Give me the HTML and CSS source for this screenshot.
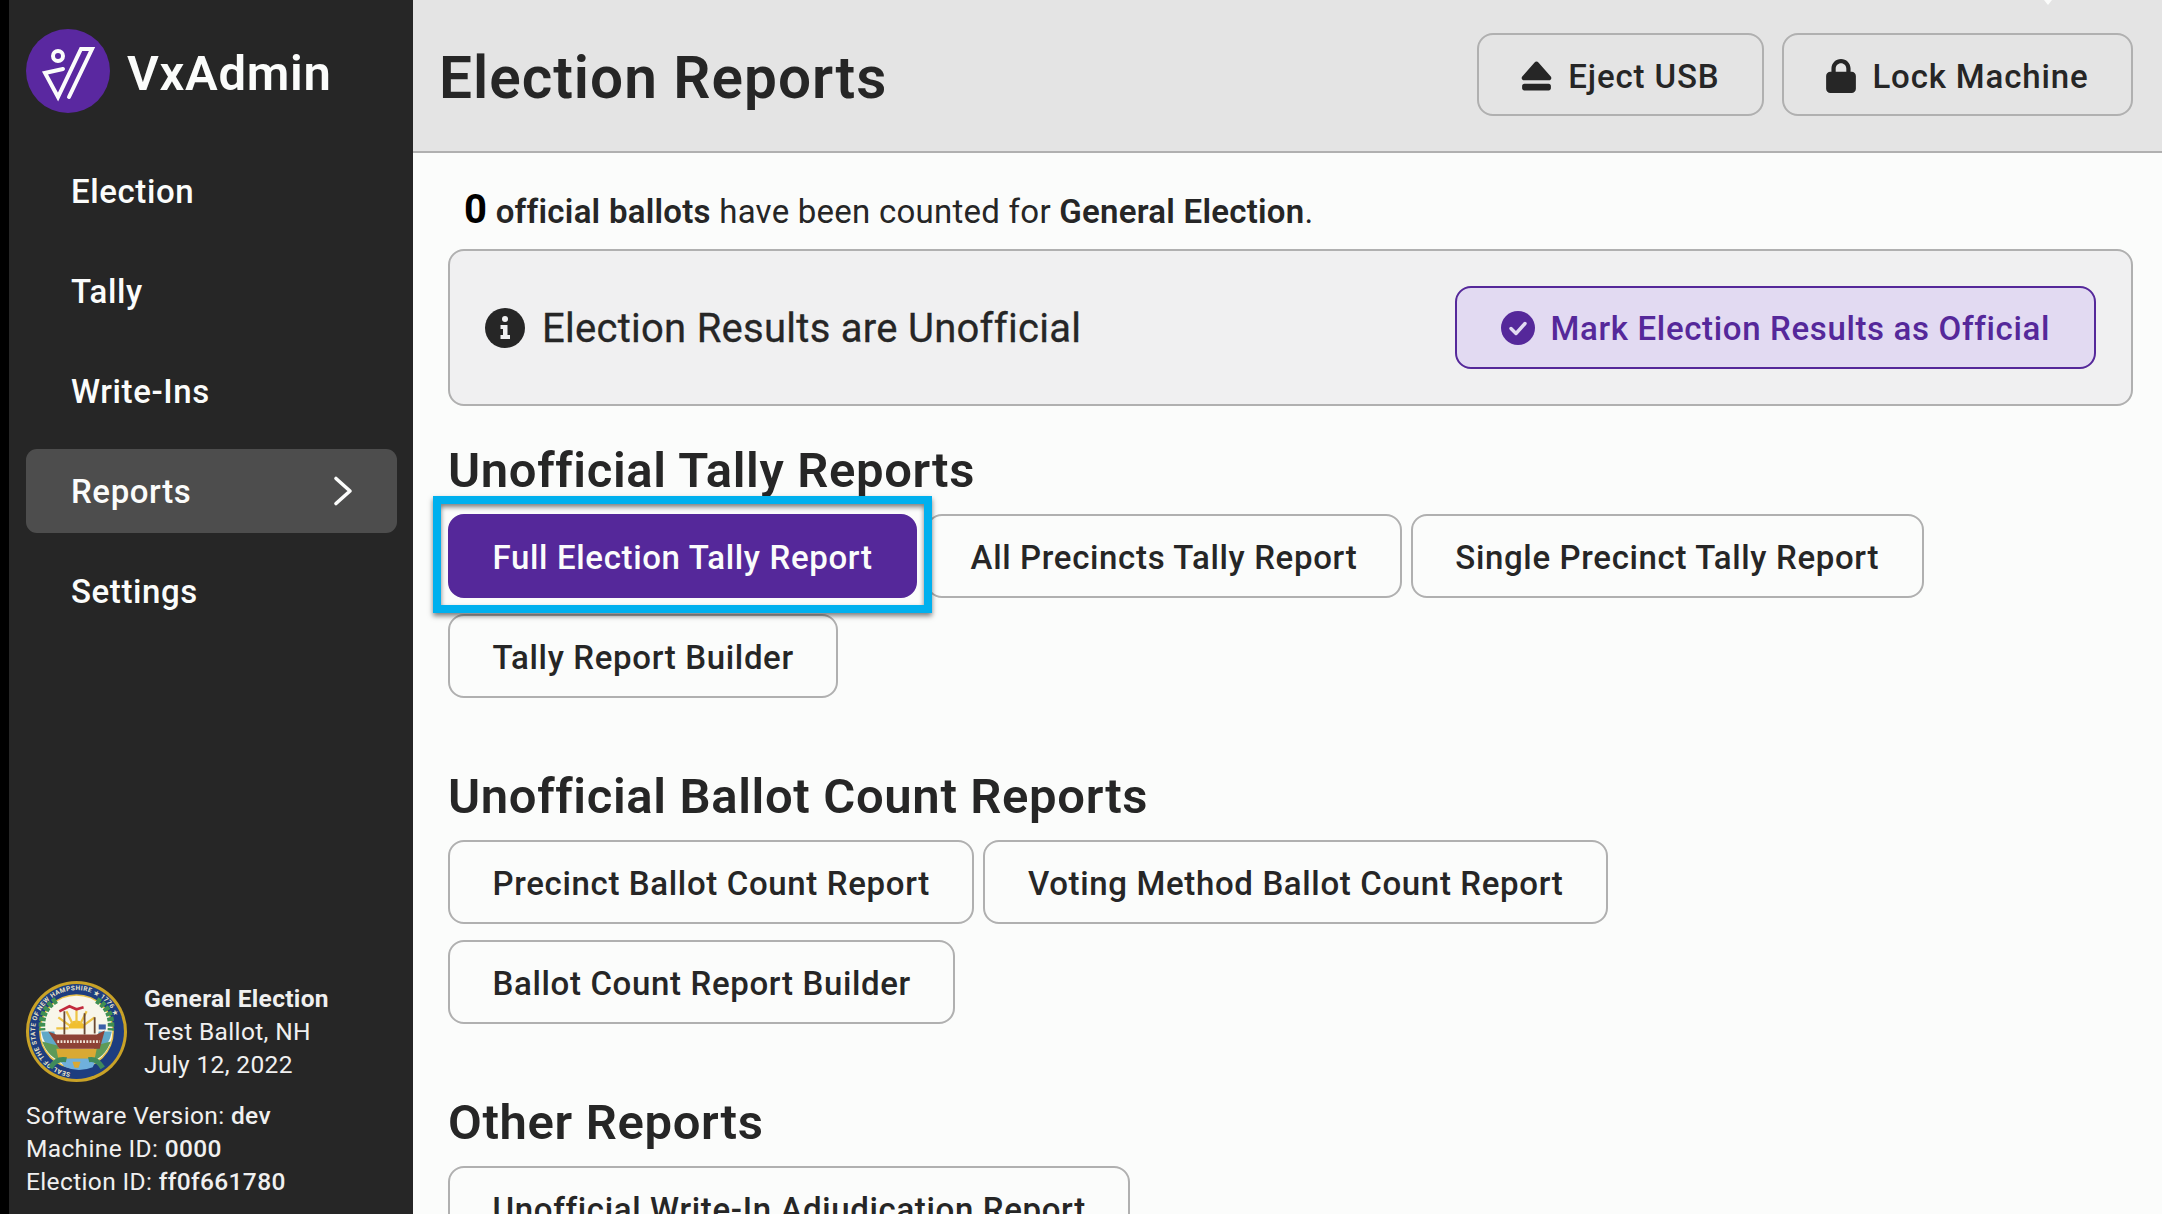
FILE: index.html
```html
<!DOCTYPE html>
<html lang="en">
<head>
<meta charset="utf-8">
<title>VxAdmin</title>
<link rel="stylesheet" href="styles.css">
</head>
<body>
<div class="app">
  <aside class="sidebar">
    <div class="brand">
      <svg class="logo" viewBox="0 0 84 84" aria-hidden="true">
        <circle cx="42" cy="42" r="42" fill="#5a28a0"/>
        <g fill="none" stroke="#fbfcfb" stroke-width="4" stroke-linejoin="miter" stroke-linecap="round">
          <path d="M43 68 L66 20 L55 20 L32 68 L19 44 L37 40"/>
          <circle cx="32" cy="27" r="5"/>
        </g>
      </svg>
      <span class="brand-name">VxAdmin</span>
    </div>
    <nav class="nav">
      <a class="nav-item">Election</a>
      <a class="nav-item">Tally</a>
      <a class="nav-item">Write-Ins</a>
      <a class="nav-item active">Reports
        <svg class="chev" viewBox="0 0 24 32" aria-hidden="true"><path d="M5 3.5 L19 16 L5 28.5" fill="none" stroke="#fbfcfb" stroke-width="3.6" stroke-linecap="round" stroke-linejoin="round"/></svg>
      </a>
      <a class="nav-item">Settings</a>
    </nav>
    <div class="meta">
      <div class="election">
        <svg class="seal" viewBox="0 0 100 100" aria-hidden="true">
          <defs><path id="ringText" d="M50 50 m0 41 a41 41 0 1 1 0.01 0"/></defs>
          <circle cx="50" cy="50" r="50" fill="#c9a227"/>
          <circle cx="50" cy="50" r="47" fill="#1d3d7f"/>
          <text class="seal-text"><textPath href="#ringText" startOffset="6">SEAL OF THE STATE OF NEW HAMPSHIRE ★ 1776 ★</textPath></text>
          <circle cx="50" cy="50" r="37" fill="#e8c14a"/>
          <circle cx="50" cy="50" r="35.5" fill="#f8f6ea"/>
          <path d="M15 50 H28 L32 67 H68 L72 50 H85 A35.5 35.5 0 0 1 15 50Z" fill="#5fa8c8"/>
          <path d="M16 60 Q22 76 36 80 L32 64Z M84 60 Q78 76 64 80 L68 64Z" fill="#5d9a58"/>
          <path d="M30 67 H70 L68 77 H32Z" fill="#d9a933"/>
          <path d="M32 77 H70 L66 85.4 A36 36 0 0 1 38 85Z" fill="#6fb0dc"/>
          <path d="M24 86 Q30 76 40 78 M76 86 Q70 76 62 78" fill="none" stroke="#3f8a5c" stroke-width="5"/>
          <path d="M46 80 H54 L52 86 H48Z" fill="#d9a933"/>
          <path d="M42 47 A8 8 0 0 1 58 47Z" fill="#f1bf2e"/>
          <g stroke="#eec444" stroke-width="2.2"><path d="M50 42 V29M46 42 L40 30M54 42 L60 30M43 44 L32 36M57 44 L68 36M42 47 H30"/></g>
          <path d="M22 50 L30 53 H70 L78 49 L73 67 H33Z" fill="#8d4235"/>
          <path d="M31 60 H73" stroke="#f0e6d8" stroke-width="2.6" stroke-dasharray="1.8 1.4"/>
          <g stroke="#6b4a35" stroke-width="1.8"><path d="M38 30 V53M58 32 V53M68 36 V52"/></g>
          <path d="M72 43 H79 V48 H72Z" fill="#3a5ea8"/>
          <path d="M33 30 L43 25 L50 28 L57 26" fill="none" stroke="#c22b3d" stroke-width="2.6"/>
          <path d="M30 19 Q14 28 16 49 M70 19 Q86 28 84 49" fill="none" stroke="#3f8f52" stroke-width="6.5" stroke-dasharray="4 1.5"/>
        </svg>
        <div class="election-text">
          <strong>General Election</strong>
          <span>Test Ballot, NH</span>
          <span>July 12, 2022</span>
        </div>
      </div>
      <div class="meta-lines">
        <div>Software Version: <b>dev</b></div>
        <div>Machine ID: <b>0000</b></div>
        <div>Election ID: <b>ff0f661780</b></div>
      </div>
    </div>
  </aside>
  <div class="page">
    <header class="header">
      <h1>Election Reports</h1>
      <div class="header-actions">
        <button class="btn btn-header">
          <svg class="ico-eject" viewBox="0 0 448 512" aria-hidden="true"><path d="M224 48c-11 0-21 5-28 13L18 264c-9 10-11 24-5 35s17 19 30 19h362c13 0 24-8 30-19s4-25-5-35L252 61c-7-8-17-13-28-13zM48 368c-18 0-32 14-32 32v32c0 18 14 32 32 32h352c18 0 32-14 32-32v-32c0-18-14-32-32-32z" fill="#262626"/></svg>
          Eject USB
        </button>
        <button class="btn btn-header">
          <svg class="ico-lock" viewBox="0 0 448 512" aria-hidden="true"><path d="M144 144v48h160v-48c0-44-36-80-80-80s-80 36-80 80zM80 192v-48C80 64 144 0 224 0s144 64 144 144v48h16c35 0 64 29 64 64v192c0 35-29 64-64 64H64c-35 0-64-29-64-64V256c0-35 29-64 64-64z" fill="#262626"/></svg>
          Lock Machine
        </button>
      </div>
    </header>
    <main class="main">
      <p class="summary"><span class="zero">0</span> <b>official ballots</b> have been counted for <b>General Election</b>.</p>
      <section class="panel">
        <div class="status">
          <svg class="ico-info" viewBox="0 0 40 40" aria-hidden="true">
            <circle cx="20" cy="20" r="20" fill="#262626"/>
            <circle cx="20" cy="11" r="3" fill="#f0f0f1"/>
            <path d="M15.5 17 H22.5 V27 H25 V31 H15.5 V27 H18 V21 H15.5Z" fill="#f0f0f1"/>
          </svg>
          <span class="status-text">Election Results are Unofficial</span>
        </div>
        <button class="btn btn-mark">
          <svg class="ico-check" viewBox="0 0 34 34" aria-hidden="true">
            <circle cx="17" cy="17" r="17" fill="#55289a"/>
            <path d="M10 17.5 L15 22.5 L24 12.5" fill="none" stroke="#e2daf2" stroke-width="3.4" stroke-linecap="round" stroke-linejoin="round"/>
          </svg>
          Mark Election Results as Official
        </button>
      </section>
      <h2>Unofficial Tally Reports</h2>
      <div class="btn-row">
        <button class="btn btn-primary">Full Election Tally Report</button>
        <button class="btn">All Precincts Tally Report</button>
        <button class="btn">Single Precinct Tally Report</button>
        <button class="btn">Tally Report Builder</button>
      </div>
      <h2>Unofficial Ballot Count Reports</h2>
      <div class="btn-row">
        <button class="btn">Precinct Ballot Count Report</button>
        <button class="btn">Voting Method Ballot Count Report</button>
        <button class="btn">Ballot Count Report Builder</button>
      </div>
      <h2>Other Reports</h2>
      <div class="btn-row">
        <button class="btn">Unofficial Write-In Adjudication Report</button>
      </div>
    </main>
  </div>
</div>
<svg class="cursor" viewBox="0 0 12 6" aria-hidden="true"><path d="M2 0 L6 5 L10 0Z" fill="#fbfcfb"/></svg>
</body>
</html>
```
FILE: styles.css
```css
* { box-sizing: border-box; }
html, body { margin: 0; height: 100%; overflow: hidden; }
body { font-family: Roboto, "Liberation Sans", sans-serif; color: #262626; background: #000; }
.app { display: flex; height: 1214px; width: 2162px; padding-left: 9px; }
.sidebar { width: 404px; flex: none; background: #262626; color: #fbfcfb; display: flex; flex-direction: column; padding: 29px 16px 0 17px; }
.brand { display: flex; align-items: center; gap: 17px; height: 84px; }
.logo { width: 84px; height: 84px; flex: none; }
.brand-name { font-size: 49px; font-weight: 600; letter-spacing: 0.7px; padding-top: 4px; }
.nav { display: flex; flex-direction: column; gap: 16px; margin-top: 36px; }
.nav-item { display: flex; align-items: center; justify-content: space-between; height: 84px; padding: 0 42px 0 45px; font-size: 33px; font-weight: 500; letter-spacing: 0.6px; border-radius: 11px; }
.nav-item.active { background: #4d4d4d; }
.chev { width: 24px; height: 32px; }
.meta { margin-top: auto; padding-bottom: 16px; font-size: 24.5px; line-height: 33px; letter-spacing: 0.36px; color: #f0f0f0; }
.election { display: flex; align-items: center; gap: 17px; margin-bottom: 17px; }
.seal { width: 101px; height: 101px; flex: none; }
.seal-text { font-size: 6.4px; font-weight: 700; fill: #e8e4c8; font-family: Roboto, sans-serif; letter-spacing: 0.45px; }
.election-text { display: flex; flex-direction: column; }
.election-text strong { font-weight: 700; letter-spacing: 0.32px; }
.meta-lines b { font-weight: 500; }
.page { flex: 1; min-width: 0; display: flex; flex-direction: column; background: #fbfcfb; }
.header { flex: none; height: 153px; display: flex; align-items: center; justify-content: space-between; padding: 0 29px 2px 26px; background: #e4e4e4; border-bottom: 2px solid #b0b0b0; }
h1 { margin: 6px 0 0; font-size: 58.5px; font-weight: 600; letter-spacing: 1px; }
.header-actions { display: flex; gap: 18px; }
.btn { display: inline-flex; align-items: center; justify-content: center; gap: 15px; height: 84px; padding: 3px 42.5px 0; font-family: inherit; font-size: 33px; font-weight: 500; letter-spacing: 0.65px; color: #262626; background: transparent; border: 2.5px solid #b0b0b0; border-radius: 16px; white-space: nowrap; }
.btn-header { height: 83px; gap: 16px; letter-spacing: 0.85px; }
.ico-eject { width: 31px; height: 36px; }
.ico-lock { width: 30px; height: 34px; }
.main { flex: 1; min-height: 0; overflow: hidden; padding: 35px 29px 0 35px; }
.summary { margin: 0 0 0 16px; font-size: 33px; line-height: 44px; letter-spacing: 0.25px; }
.summary b { font-weight: 600; }
.zero { font-size: 40px; font-weight: 700; color: #000; }
.panel { display: flex; align-items: center; justify-content: space-between; height: 157px; margin: 15px 0 33px; padding: 0 35px; background: #f0f0f1; border: 2.5px solid #b0b0b0; border-radius: 16px; }
.status { display: flex; align-items: center; gap: 17px; font-size: 40px; font-weight: 400; letter-spacing: 0.27px; -webkit-text-stroke: 0.3px #262626; }
.status-text { padding-top: 2px; }
.ico-info { width: 40px; height: 40px; flex: none; }
.btn-mark { height: 83px; padding: 1px 44px 0; gap: 16px; color: #55289a; background: #e2daf2; border-color: #55289a; }
.ico-check { width: 34px; height: 34px; }
h2 { margin: 0 0 11px; font-size: 49px; font-weight: 600; line-height: 64px; letter-spacing: 0.65px; }
.btn-row { display: flex; flex-wrap: wrap; column-gap: 9px; row-gap: 16px; margin-bottom: 67px; padding-right: 12px; }
.btn-primary { position: relative; color: #fbfcfb; background: #55289a; border-color: #55289a; }
.btn-primary::after { content: ""; position: absolute; left: -17.5px; right: -16.5px; top: -20.5px; bottom: -16.5px; border: 8px solid #00b0ee; box-shadow: 0 3px 5px rgba(0,0,0,.5), inset 0 3px 5px rgba(0,0,0,.5); }
.cursor { position: absolute; left: 2042px; top: 0; width: 12px; height: 6px; }
```
